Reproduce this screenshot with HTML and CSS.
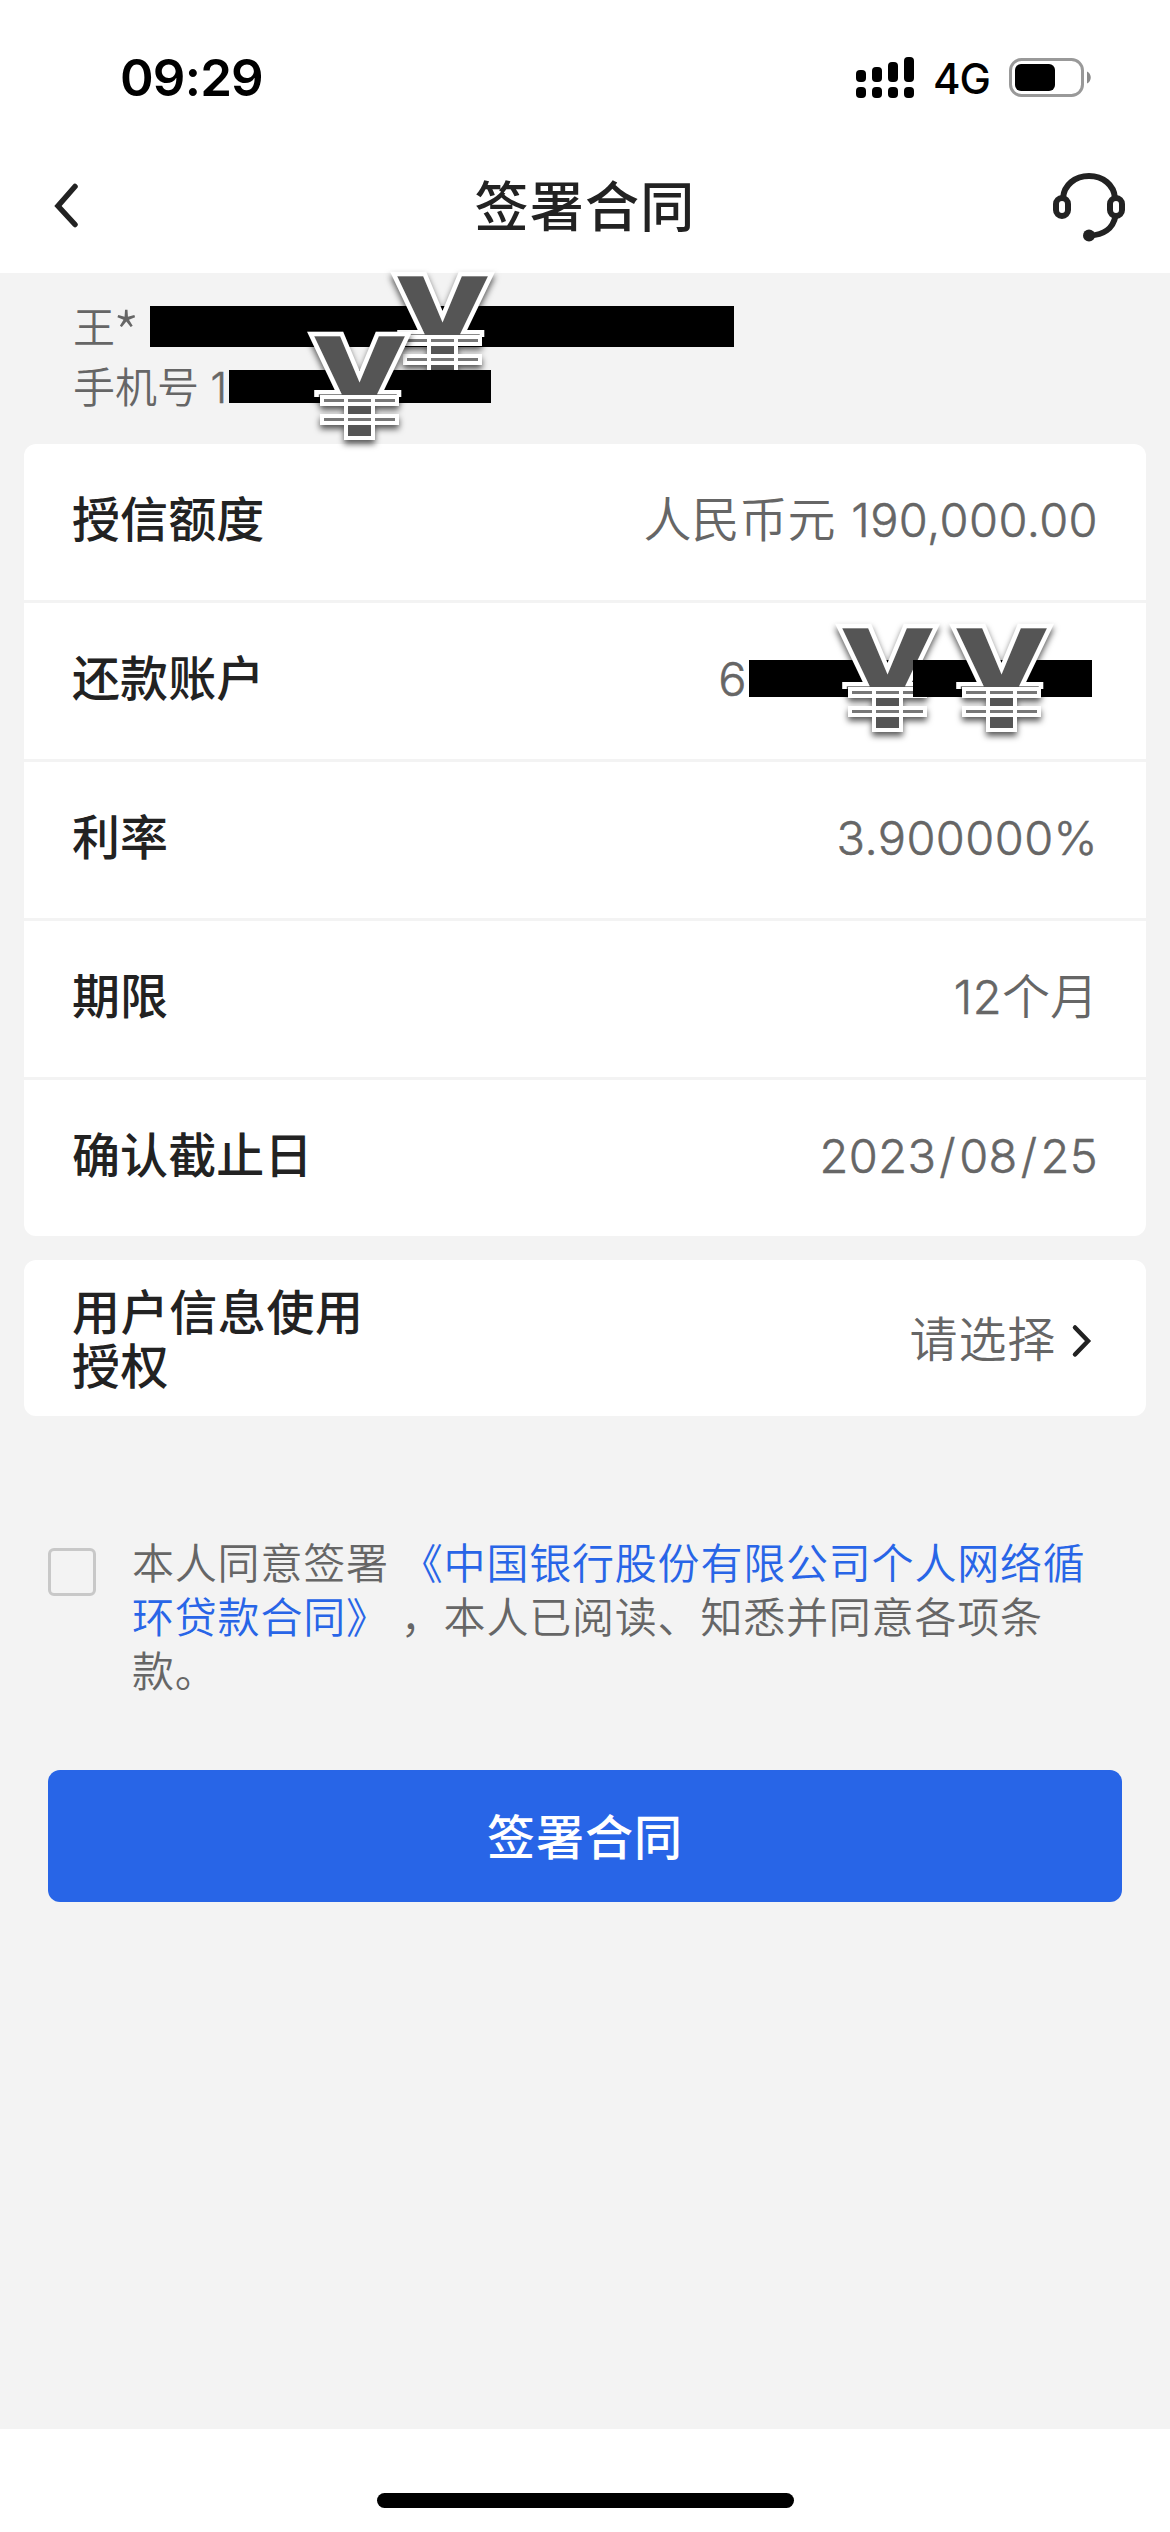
FILE: index.html
```html
<!DOCTYPE html>
<html lang="zh-CN">
<head>
<meta charset="utf-8">
<title>签署合同</title>
<link rel="stylesheet" href="styles.css">
</head>
<body>
<div class="phone">
  <header class="status-bar">
    <span class="time">09:29</span>
    <div class="indicators">
      <svg class="signal" width="58" height="42" viewBox="0 0 58 42">
        <rect x="0" y="13" width="10" height="12" rx="4"/>
        <rect x="16" y="10" width="10" height="15" rx="4"/>
        <rect x="32" y="5" width="10" height="20" rx="4"/>
        <rect x="48" y="0" width="10" height="25" rx="4"/>
        <rect x="0" y="30" width="10" height="11" rx="4"/>
        <rect x="16" y="30" width="10" height="11" rx="4"/>
        <rect x="32" y="30" width="10" height="11" rx="4"/>
        <rect x="48" y="30" width="10" height="11" rx="4"/>
      </svg>
      <span class="network">4G</span>
      <svg class="battery" width="83" height="39" viewBox="0 0 83 39">
        <rect x="1.5" y="1.5" width="72" height="36" rx="11" fill="none" stroke="#999" stroke-width="3"/>
        <rect x="6" y="6" width="40" height="27" rx="6"/>
        <path d="M78 13.5C83 15.500 83 23.500 78 25.500Z" fill="#8a8a8a"/>
      </svg>
    </div>
  </header>

  <nav class="nav-bar">
    <svg class="back" width="28" height="46" viewBox="0 0 28 46">
      <path d="M23 3.500 6 23 23 41.500" fill="none" stroke="#222" stroke-width="5.500" stroke-linecap="round" stroke-linejoin="miter"/>
    </svg>
    <h1 class="title">签署合同</h1>
    <svg class="service" width="74" height="70" viewBox="0 0 74 70" fill="none" stroke="#222" stroke-width="6">
      <path d="M11 26C12 13 23 4 37 4S62 13 63 26"/>
      <rect x="4" y="26" width="12" height="18" rx="6"/>
      <rect x="58" y="26" width="12" height="18" rx="6"/>
      <path d="M63.500 44C61 57 51 63 38 63.500"/>
      <circle cx="37" cy="63.500" r="6" fill="#222" stroke="none"/>
    </svg>
  </nav>

  <main class="content">
    <section class="customer">
      <p class="line">王<span class="star">*</span></p>
      <p class="line">手机号 <span class="latin">1</span></p>
      <i class="mask mask-id"></i>
      <span class="yen yen-a"><b><span>¥</span></b></span>
      <i class="mask mask-phone"></i>
      <span class="yen yen-b"><b><span>¥</span></b></span>
    </section>

    <section class="card">
      <div class="row"><span class="label">授信额度</span><span class="value">人民币元 <span class="num amount">190,000.00</span></span></div>
      <div class="row">
        <span class="label">还款账户</span><span class="value account"><span class="num">6</span></span>
        <i class="mask mask-card"></i>
        <span class="yen yen-c"><b><span>¥</span></b></span>
        <i class="mask mask-over"></i>
        <span class="yen yen-d"><b><span>¥</span></b></span>
      </div>
      <div class="row"><span class="label">利率</span><span class="value"><span class="num">3.900000%</span></span></div>
      <div class="row"><span class="label">期限</span><span class="value"><span class="num">12</span>个月</span></div>
      <div class="row"><span class="label">确认截止日</span><span class="value"><span class="num">2023<span class="slash">/</span>08<span class="slash">/</span>25</span></span></div>
    </section>

    <section class="card auth">
      <div class="row">
        <span class="label">用户信息使用授权</span>
        <span class="value choose">请选择
          <svg width="22" height="36" viewBox="0 0 22 36"><path d="M4 4.500 17 18 4 31.500" fill="none" stroke="#222" stroke-width="4.500" stroke-linecap="round"/></svg>
        </span>
      </div>
    </section>

    <section class="agreement">
      <span class="checkbox"></span>
      <p class="terms">本人同意签署<a class="link">《中国银行股份有限公司个人网络循环贷款合同》</a>，本人已阅读、知悉并同意各项条款。</p>
    </section>

    <button class="submit">签署合同</button>
  </main>

  <footer class="home-area"><span class="home-indicator"></span></footer>
</div>
</body>
</html>
```
FILE: styles.css
```css
*, *::before, *::after { box-sizing: border-box; margin: 0; padding: 0; }

body {
  background: #fff;
  color: #222;
  font-family: "Noto Sans CJK SC", sans-serif;
}

.phone {
  display: flex;
  flex-direction: column;
  width: 1170px;
  height: 2532px;
  overflow: hidden;
}

.status-bar {
  display: flex;
  justify-content: space-between;
  align-items: flex-start;
  height: 141px;
  padding: 57px 78px 0 120px;
  color: #000;
  font-family: Inter, sans-serif;
}
.time { font-size: 51px; font-weight: 600; line-height: 42px; letter-spacing: -0.8px; }
.indicators { display: flex; align-items: flex-start; }
.network { margin: 1px 0 0 19px; width: 76px; font-size: 42px; font-weight: 500; line-height: 42px; letter-spacing: -1px; }
.battery { margin-top: 1px; }

.nav-bar {
  display: flex;
  justify-content: space-between;
  align-items: center;
  height: 132px;
  padding: 0 44px 0 52px;
}
.back { margin: 0 38px 2px 0; }
.title { padding-bottom: 6px; font-size: 54px; font-weight: 500; line-height: 80px; letter-spacing: 1.3px; }

.content { flex: 1; background: #f3f3f3; }

.customer {
  position: relative;
  height: 171px;
  padding: 22px 73px 0;
  color: #666;
  font-size: 42px;
  font-weight: 350;
}
.line { height: 60px; line-height: 60px; white-space: pre; }
.latin { margin-left: 2px; font-family: Inter, sans-serif; font-size: 42px; font-weight: 300; -webkit-text-stroke: .5px #666; }
.star { margin-left: -2px; font-size: 60px; line-height: 40px; vertical-align: -14px; font-weight: 300; }

.mask { position: absolute; background: #000; }
.mask-id { left: 150px; top: 33px; width: 584px; height: 41px; }
.mask-phone { left: 229px; top: 97px; width: 262px; height: 33px; }
.mask-card { left: 725px; top: 57px; width: 343px; height: 37px; }
.mask-over { left: 889px; top: 57px; width: 100px; height: 37px; }

/* Currency sticker: the arms come from the glyph, the stem and crossbars are outlined boxes. */
.yen {
  position: absolute;
  width: 103px;
  height: 107px;
  filter: drop-shadow(0 4px 3px rgba(0, 0, 0, .65));
}
.yen b {
  display: block;
  height: 107px;
  clip-path: inset(-5px -10px 43px -10px);
}
.yen span {
  display: flex;
  justify-content: center;
  color: #555;
  font-family: Inter, sans-serif;
  font-size: 138px;
  font-weight: 800;
  line-height: 107px;
  transform: translateY(-4px) scale(1.29, 1.22);
  transform-origin: top center;
  -webkit-text-stroke: 3.5px #fff;
}
.yen::before {
  content: "";
  position: absolute;
  left: 36px;
  top: 63px;
  width: 31px;
  height: 44px;
  border: 4px solid #fff;
  border-top: 0;
  background: #555;
}
.yen::after {
  content: "";
  position: absolute;
  left: 12px;
  top: 62px;
  width: 79px;
  height: 30px;
  background:
    linear-gradient(90deg, #fff 4px, transparent 4px 24px, #fff 24px 28px, transparent 28px 51px, #fff 51px 55px, transparent 55px 75px, #fff 75px) 0 0 / 100% 11px no-repeat,
    linear-gradient(90deg, #fff 4px, transparent 4px 24px, #fff 24px 28px, transparent 28px 51px, #fff 51px 55px, transparent 55px 75px, #fff 75px) 0 19px / 100% 11px no-repeat,
    linear-gradient(#fff 4px, #777 4px 7px, #fff 7px 11px, transparent 11px 19px, #fff 19px 23px, #777 23px 26px, #fff 26px);
}
.yen-a { left: 391px; top: 0; }
.yen-b { left: 308px; top: 60px; }
.yen-c { left: 812px; top: 22px; }
.yen-d { left: 926px; top: 22px; }

.card { margin: 0 24px; overflow: hidden; border-radius: 12px; background: #fff; }
.row {
  position: relative;
  display: flex;
  justify-content: space-between;
  align-items: center;
  height: 159px;
  padding: 0 48px 9px;
  border-bottom: 3px solid #f3f3f3;
  font-size: 48px;
}
.row:last-child { height: 156px; border-bottom: 0; }
.label { padding-bottom: 3px; font-weight: 500; line-height: 54px; letter-spacing: .1px; }
.value { color: #666; font-weight: 350; white-space: pre; line-height: 54px; }
.num { font-family: Inter, sans-serif; font-size: 47px; font-weight: 300; letter-spacing: .4px; -webkit-text-stroke: .5px #666; }
.amount { margin-left: 5px; }
.slash { margin: 0 3px; }
.account { margin-right: 351px; }

.auth { margin-top: 24px; }
.auth .row { padding-bottom: 4px; }
.auth .label { width: 296px; padding-bottom: 0; letter-spacing: .6px; }
.choose { display: flex; align-items: center; gap: 15px; white-space: normal; letter-spacing: .8px; }
.choose svg { margin: 10px 5px 0 0; }

.agreement { display: flex; gap: 36px; margin: 118px 48px 0; }
.checkbox { flex: none; width: 48px; height: 48px; margin-top: 14px; border: 3px solid #c8c8c8; border-radius: 6px; }
.terms { color: #666; font-size: 42px; font-weight: 350; line-height: 54px; letter-spacing: .8px; text-spacing-trim: space-all; }
.link { margin: 0 12px; color: #2865e7; }

.submit {
  display: block;
  width: 1074px;
  height: 132px;
  margin: 74px 48px 0;
  padding-bottom: 4px;
  border: 0;
  border-radius: 12px;
  background: #2865e7;
  color: #fff;
  font-family: inherit;
  font-size: 48px;
  font-weight: 500;
  letter-spacing: 1px;
}

.home-area { display: flex; justify-content: center; height: 103px; padding-top: 64px; background: #fff; }
.home-indicator { width: 417px; height: 15px; border-radius: 8px; background: #000; }
```
